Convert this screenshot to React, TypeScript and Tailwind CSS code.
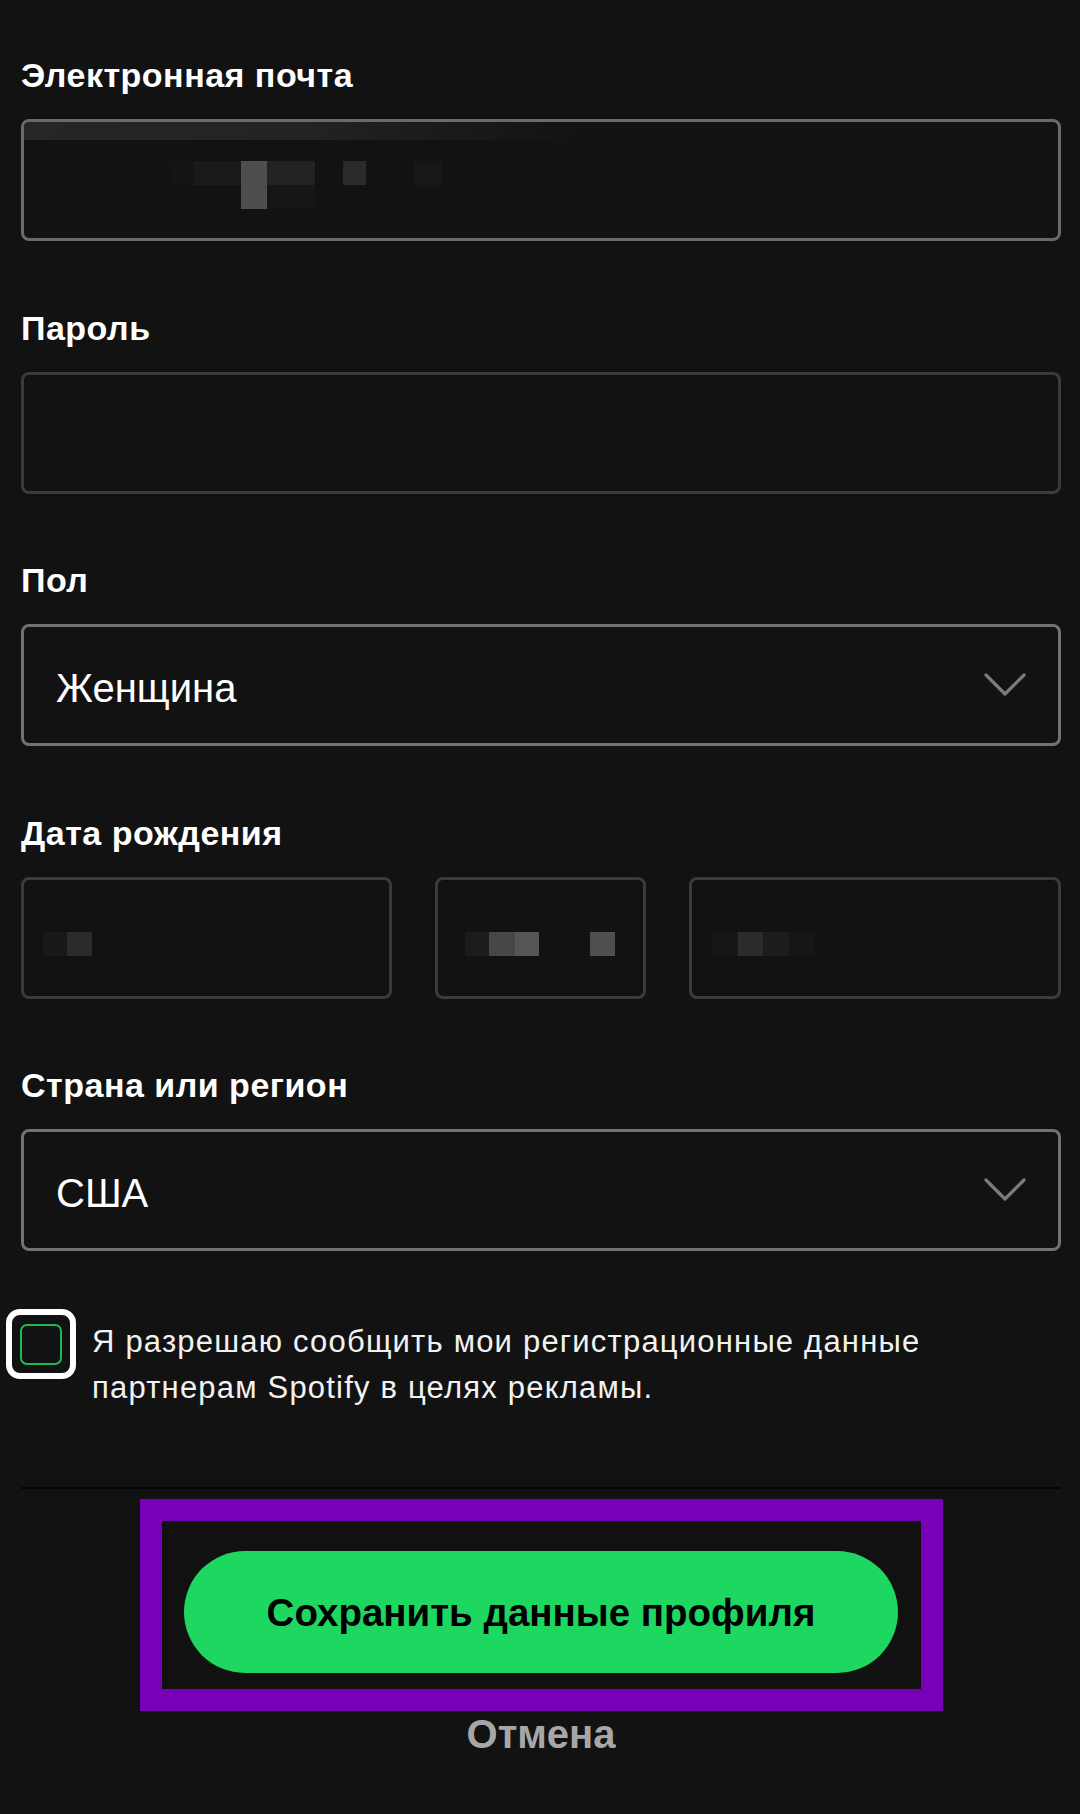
import React from "react";

const font = { fontFamily: '"Liberation Sans", Arial, sans-serif' };

function Chevron() {
  return (
    <svg width="44" height="26" viewBox="0 0 44 26" className="shrink-0" fill="none">
      <path d="M3 3 L22 22 L41 3" stroke="#7c7c7c" strokeWidth="3.2" strokeLinecap="round" strokeLinejoin="round" />
    </svg>
  );
}

function Label({ children }: { children: React.ReactNode }) {
  return <div className="text-[34px] leading-[40px] font-bold tracking-[0.5px] text-white">{children}</div>;
}

function Px({ w = 24, c }: { w?: number; c: string }) {
  return <div className="h-[24px] shrink-0" style={{ width: w, background: c }} />;
}

function Select({ value }: { value: string }) {
  return (
    <div className="mt-[24px] h-[122px] rounded-[8px] border-[3px] border-[#727272] bg-[#121212] flex items-center justify-between pl-[32px] pr-[31px]">
      <span className="text-[40px] text-white pt-[6px]">{value}</span>
      <Chevron />
    </div>
  );
}

export default function App() {
  return (
    <div style={font} className="w-[1080px] h-[1814px] bg-[#121212] pl-[21px] pr-[19px] pt-[55px] overflow-hidden">
      <div className="flex flex-col gap-[66.6px]">
        <div>
          <Label>Электронная почта</Label>
          <div className="relative mt-[24px] h-[122px] rounded-[8px] border-[3px] border-[#6a6a6a] bg-[#121212] overflow-hidden pl-[147px] pt-[39px]">
            <div className="absolute left-0 top-0 h-[18px] w-[560px] bg-gradient-to-r from-[#262626] via-[#232323] to-transparent" />
            <div className="flex">
              <Px w={22} c="#141414" />
              <Px w={48} c="#191919" />
              <div className="w-[26px] h-[48px] bg-[#4e4e4e]" />
              <div className="flex flex-col">
                <Px w={48} c="#222222" />
                <Px w={48} c="#161616" />
              </div>
              <div className="w-[28px]" />
              <Px w={23} c="#2a2a2a" />
              <div className="w-[48px]" />
              <Px w={28} c="#171717" />
            </div>
          </div>
        </div>
        <div>
          <Label>Пароль</Label>
          <div className="mt-[24px] h-[122px] rounded-[8px] border-[3px] border-[#3b3b3b] bg-[#121212]" />
        </div>
        <div>
          <Label>Пол</Label>
          <Select value="Женщина" />
        </div>
        <div>
          <Label>Дата рождения</Label>
          <div className="mt-[24px] grid grid-cols-[371px_211px_1fr] gap-[43px]">
            <div className="h-[122px] rounded-[8px] border-[3px] border-[#3b3b3b] bg-[#121212] flex items-center pl-[19px] pt-[12px]">
              <Px c="#181818" />
              <Px w={25} c="#2b2b2b" />
            </div>
            <div className="h-[122px] rounded-[8px] border-[3px] border-[#3b3b3b] bg-[#121212] flex items-center pl-[27px] pt-[12px]">
              <Px c="#1c1c1c" />
              <Px w={26} c="#474747" />
              <Px c="#555555" />
              <div className="w-[51px]" />
              <Px w={25} c="#4f4f4f" />
            </div>
            <div className="h-[122px] rounded-[8px] border-[3px] border-[#3b3b3b] bg-[#121212] flex items-center pl-[21px] pt-[12px]">
              <Px w={25} c="#161616" />
              <Px w={25} c="#2b2b2b" />
              <Px w={26} c="#1c1c1c" />
              <Px w={25} c="#161616" />
            </div>
          </div>
        </div>
        <div>
          <Label>Страна или регион</Label>
          <Select value="США" />
        </div>
      </div>

      <div className="mt-[58px] -ml-[15px] flex items-start gap-[16px]">
        <div className="w-[70px] h-[70px] shrink-0 rounded-[14px] border-[6px] border-white bg-[#121212] flex items-center justify-center">
          <div className="w-[42px] h-[41px] rounded-[7px] border-2 border-[#1fb954]" />
        </div>
        <div className="mt-[10px] text-[31px] leading-[46px] tracking-[1.2px] text-[#f2f2f2]">
          Я разрешаю сообщить мои регистрационные данные
          <br />
          партнерам Spotify в целях рекламы.
        </div>
      </div>

      <div className="mt-[76px] h-[2px] bg-[#050505]" />

      <div className="mt-[10px] mx-auto w-[803px] h-[212px] border-[22px] border-[#7800b6] bg-[#111111] pt-[30px]">
        <div className="mx-auto w-[714px] h-[122px] rounded-full bg-[#1ed760] flex items-center justify-center">
          <span className="text-[38.5px] font-bold text-black">Сохранить данные профиля</span>
        </div>
      </div>

      <div className="text-center text-[40px] leading-[46px] font-bold text-[#a7a7a7]">Отмена</div>
    </div>
  );
}
